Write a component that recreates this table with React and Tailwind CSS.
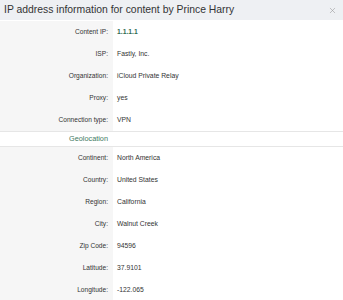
import { X } from 'lucide-react'

const NETWORK = [
  { label: 'Content IP:', value: '1.1.1.1', ip: true },
  { label: 'ISP:', value: 'Fastly, Inc.' },
  { label: 'Organization:', value: 'iCloud Private Relay' },
  { label: 'Proxy:', value: 'yes' },
  { label: 'Connection type:', value: 'VPN' },
]

const GEO = [
  { label: 'Continent:', value: 'North America' },
  { label: 'Country:', value: 'United States' },
  { label: 'Region:', value: 'California' },
  { label: 'City:', value: 'Walnut Creek' },
  { label: 'Zip Code:', value: '94596' },
  { label: 'Latitude:', value: '37.9101' },
  { label: 'Longitude:', value: '-122.065' },
]

function Row({ label, value, ip }) {
  return (
    <div className="flex h-[22px] items-center">
      <div className="flex h-full w-[113px] shrink-0 items-center justify-end bg-[#f6f6f6] pr-[5px] text-[6.6px] text-[#333]">
        {label}
      </div>
      <div className={`pl-[4px] text-[6.8px] ${ip ? 'font-bold text-[#2f6b52]' : 'text-[#333]'}`}>
        {value}
      </div>
    </div>
  )
}

export default function App() {
  return (
    <div className="h-[300px] w-[343px] overflow-hidden bg-white" style={{ fontFamily: '"Liberation Sans", Arial, sans-serif' }}>
      <div className="flex h-[20px] items-center justify-between bg-[#eef0f3] pl-[4px] pr-[6px]">
        <h1 className="text-[10.4px] font-normal text-[#333]">IP address information for content by Prince Harry</h1>
        <X size={9} strokeWidth={1.5} className="text-[#999]" />
      </div>

      <div className="pt-[1px]">
        {NETWORK.map((row) => (
          <Row key={row.label} {...row} />
        ))}
      </div>

      <div className="flex h-[16px] items-center border-y border-[#e6e6e6] bg-white">
        <div className="w-[113px] pr-[5px] text-right text-[7.3px] text-[#3f7a62]">Geolocation</div>
      </div>

      <div>
        {GEO.map((row) => (
          <Row key={row.label} {...row} />
        ))}
      </div>
    </div>
  )
}
